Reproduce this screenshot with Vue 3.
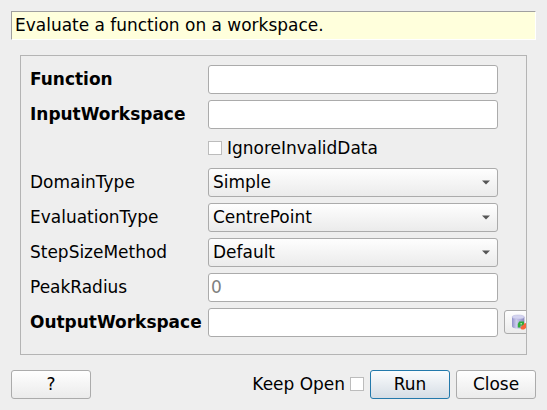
<script setup>
const rows = [
  { label: 'Function', kind: 'text', bold: true },
  { label: 'InputWorkspace', kind: 'text', bold: true },
  { label: 'IgnoreInvalidData', kind: 'check' },
  { label: 'DomainType', kind: 'select', value: 'Simple' },
  { label: 'EvaluationType', kind: 'select', value: 'CentrePoint' },
  { label: 'StepSizeMethod', kind: 'select', value: 'Default' },
  { label: 'PeakRadius', kind: 'text', placeholder: '0' },
  { label: 'OutputWorkspace', kind: 'text', bold: true, tool: true },
]
</script>

<template>
  <main class="dialog">
    <header class="banner">Evaluate a function on a workspace.</header>
    <section class="panel">
      <div v-for="row in rows" :key="row.label" class="row" :class="{ 'row-check': row.kind === 'check' }">
        <span class="label" :class="{ bold: row.bold }">{{ row.kind === 'check' ? '' : row.label }}</span>
        <label v-if="row.kind === 'check'" class="check">
          <span class="box"></span>
          <span class="caption">{{ row.label }}</span>
        </label>
        <div v-else-if="row.kind === 'select'" class="field select">
          <span class="caption">{{ row.value }}</span>
          <svg class="arrow" width="8" height="5" viewBox="0 0 8 5">
            <path d="M0 0.4H8L4 4.6Z" fill="#555" />
          </svg>
        </div>
        <div v-else class="field text"><span class="caption">{{ row.placeholder }}</span></div>
        <button v-if="row.tool" class="tool">
          <svg width="16" height="16" viewBox="0 0 16 16">
            <defs>
              <linearGradient id="drum" x1="0" x2="1" y1="0" y2="0">
                <stop offset="0" stop-color="#9090c8" />
                <stop offset="0.35" stop-color="#ceceee" />
                <stop offset="1" stop-color="#8686bc" />
              </linearGradient>
            </defs>
            <path d="M1 3V12C1 14 4 14.6 7 14.6S13.4 14 13.4 12V3Z" fill="url(#drum)" />
            <ellipse cx="7.2" cy="3" rx="6.2" ry="2" fill="#d4d4f0" stroke="#b4b4dc" stroke-width="0.5" />
            <path d="M9.4 14L11 11.5L12.6 9.8L15 9V14L13 15.6H10.6Z" fill="#f9663c" />
            <path d="M6.8 13.4V10L8.2 7.6H13V10.2L11.4 11.6H9.4V13.4Z" fill="#2eac3a" />
            <path d="M9.4 9H11V10.4H9.4Z" fill="#a5dda5" />
          </svg>
        </button>
      </div>
    </section>
    <footer class="actions">
      <button class="btn">?</button>
      <span class="spacer"></span>
      <label class="keep"><span class="caption">Keep Open</span><span class="box"></span></label>
      <button class="btn primary">Run</button>
      <button class="btn">Close</button>
    </footer>
  </main>
</template>

<style>
body {
  background: #eeeeee;
}
</style>

<style scoped>
.dialog {
  box-sizing: border-box;
  width: 547px;
  height: 410px;
  padding: 11px;
  display: flex;
  flex-direction: column;
  overflow: hidden;
  background: #eeeeee;
  color: #000;
  font: 16.985px/20px "DejaVu Sans", sans-serif;
  white-space: nowrap;
}
.banner {
  box-sizing: border-box;
  height: 29px;
  padding: 3px;
  border: 1px solid;
  border-color: #a0a0a0 #fff #fff #a0a0a0;
  background: #ffffdc;
}
.panel {
  box-sizing: border-box;
  width: 507px;
  height: 300px;
  margin: 15px 9px 0;
  padding: 9px 0 0 9px;
  border: 1px solid #b4b4b4;
  display: flex;
  flex-direction: column;
  gap: 6px;
  overflow: hidden;
}
.row {
  display: flex;
  align-items: center;
  height: 29px;
  flex: none;
}
.row-check {
  height: 27px;
}
.label {
  flex: none;
  width: 178px;
  padding-bottom: 1px;
}
.caption {
  padding-bottom: 1px;
}
.bold {
  font-weight: bold;
}
.field {
  box-sizing: border-box;
  flex: none;
  width: 290px;
  height: 29px;
  border: 1px solid #ababab;
  border-radius: 3px;
  display: flex;
  align-items: center;
}
.text {
  padding-left: 2px;
  background: #fff;
  color: #808080;
}
.select {
  padding: 0 7px 0 4px;
  justify-content: space-between;
  background: linear-gradient(#fefefe, #ebebeb);
}
.check,
.keep {
  display: flex;
  align-items: center;
  gap: 5px;
}
.check {
  height: 26px;
  align-self: flex-start;
}
.keep {
  height: 28px;
  align-self: flex-start;
}
.box {
  box-sizing: border-box;
  width: 14px;
  height: 14px;
  border: 1px solid #bcbcbc;
  background: #fff;
}
.tool {
  box-sizing: border-box;
  flex: none;
  width: 30px;
  height: 24px;
  margin: 0 0 1px 6px;
  padding: 0 0 0 6px;
  border: 1px solid #ababab;
  border-radius: 3px;
  background: linear-gradient(#fefefe, #ebebeb);
  display: flex;
  align-items: center;
}
.actions {
  display: flex;
  align-items: center;
  gap: 6px;
  margin-top: 15px;
  height: 29px;
}
.spacer {
  flex: 1;
}
.btn {
  box-sizing: border-box;
  width: 80px;
  height: 29px;
  padding: 0 0 1px;
  border: 1px solid #ababab;
  border-radius: 3px;
  background: linear-gradient(#fefefe, #ebebeb);
  color: #000;
  font: inherit;
}
.primary {
  border-color: #2379ab;
  background: linear-gradient(#fbfcfd, #d5dde5);
}
</style>
